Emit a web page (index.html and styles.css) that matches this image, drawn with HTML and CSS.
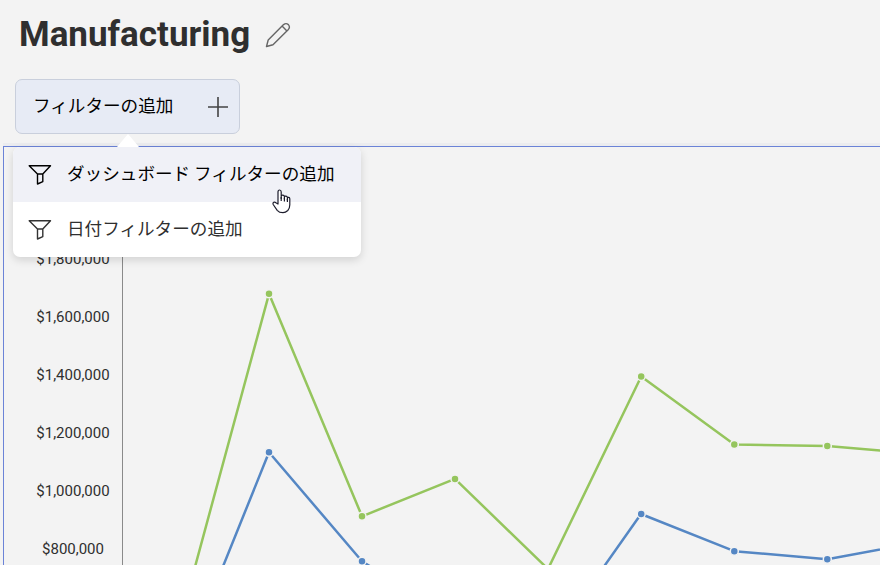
FILE: index.html
```html
<!DOCTYPE html>
<html lang="ja">
<head>
<meta charset="utf-8">
<title>Manufacturing</title>
<link rel="stylesheet" href="styles.css">
</head>
<body>
<header class="header">
  <h1 class="title">Manufacturing</h1>
  <svg class="edit" viewBox="0 0 26 26" width="26" height="26">
    <path d="M1.5 24.5 3.2 18 18.6 2.6Q21 .6 23.4 2.6 25.4 5 23.4 7.4L8 22.8ZM17.1 4.1l4.8 4.8"/>
  </svg>
</header>
<div class="toolbar">
  <button class="add-filter"><span>フィルターの追加</span>
    <svg class="plus" viewBox="0 0 20 20" width="20" height="20"><path d="M10 0v20M0 10h20"/></svg>
  </button>
  <div class="menu">
    <div class="item active">
      <svg class="funnel" viewBox="0 0 24 22" width="24" height="22"><path d="M1.2 1.7h21.3l-7.700 8.300v7.600L9.500 20V10ZM9.500 10h5.300"/></svg>
      <span>ダッシュボード フィルターの追加</span>
    </div>
    <div class="item">
      <svg class="funnel" viewBox="0 0 24 22" width="24" height="22"><path d="M1.2 1.7h21.3l-7.700 8.300v7.600L9.500 20V10ZM9.500 10h5.300"/></svg>
      <span>日付フィルターの追加</span>
    </div>
    <svg class="cursor" viewBox="0 0 20 25" width="20" height="25"><path d="M6 15V3Q6 1 7.6 1T9.2 3v6.4V7.1q.2-1.2 1.6-1t1.6 1.2V10 7.9q.3-1 1.5-.8t1.5 1.2V11 9.2q.3-1 1.3-.8t1.1 1.3v6.1q0 3.5-2 5.7Q13.500 23.700 11 23.700q-3.800 0-5.800-2.400L1.200 15.500q-.6-1.500.5-2.200 1.200-.5 2.200.4Z"/><path d="M9.200 8v4M12.400 9v3.500M15.400 10v3"/></svg>
  </div>
</div>
<main class="panel">
  <div class="labels">
    <span>$1,800,000</span><span>$1,600,000</span><span>$1,400,000</span><span>$1,200,000</span><span>$1,000,000</span><span>$800,000</span>
  </div>
  <svg class="plot" viewBox="122 147 758 418" width="758" height="418">
    <path class="axis" d="M122.500 147v418"/>
    <g class="blue">
      <path d="M176 683 269 452.300 362 561.200 455 620 548 646 641 514 734.300 551.200 827.300 559.200 920 542"/>
      <circle cx="269" cy="452.300" r="4"/><circle cx="362" cy="561.200" r="4"/><circle cx="641.200" cy="514" r="4"/><circle cx="734.300" cy="551.200" r="4"/><circle cx="827.300" cy="559.200" r="4"/>
    </g>
    <g class="green">
      <path d="M176 637 269 293.800 362 516.300 455 478.900 548 569 641.200 376.500 734.300 444.500 827.300 446 920 454"/>
      <circle cx="269" cy="293.800" r="4"/><circle cx="362" cy="516.300" r="4"/><circle cx="455" cy="478.900" r="4"/><circle cx="641.200" cy="376.500" r="4"/><circle cx="734.300" cy="444.500" r="4"/><circle cx="827.300" cy="446" r="4"/>
    </g>
  </svg>
</main>
</body>
</html>
```
FILE: styles.css
```css
* { box-sizing: border-box; }
body {
  margin: 0;
  height: 565px;
  overflow: hidden;
  background: #f3f3f3;
  color: #2f2f2f;
  font-family: Roboto, "Noto Sans CJK JP", sans-serif;
}
.header {
  display: flex;
  align-items: center;
  height: 70px;
  padding-left: 19px;
  gap: 15px;
}
.title { margin: 0; font-size: 35px; font-weight: 700; line-height: 42px; }
.edit { fill: none; stroke: #666; stroke-width: 1.4; stroke-linejoin: round; }
.toolbar {
  position: relative;
  z-index: 1;
  height: 76px;
  padding: 9px 0 0 15px;
}
.add-filter {
  display: flex;
  align-items: center;
  justify-content: space-between;
  width: 225px;
  height: 55px;
  padding: 0 11px 0 17px;
  border: 1px solid #c9cfdc;
  border-radius: 7px;
  background: #e7ebf5;
  color: #000;
  font: 17.600px/26px "Noto Sans CJK JP", sans-serif;
}
.add-filter span, .item span { padding-bottom: 4px; }
.plus { fill: none; stroke: #444; stroke-width: 1.6; }
.menu {
  position: absolute;
  top: 77px;
  left: 13px;
  width: 348px;
  height: 110px;
  border-radius: 7px;
  background: #fff;
  box-shadow: 0 3px 9px rgba(0, 0, 0, .14);
  font: 17.600px/26px "Noto Sans CJK JP", sans-serif;
}
.menu::before {
  content: "";
  position: absolute;
  left: 104px;
  top: -13px;
  width: 22px;
  height: 13px;
  background: #fff;
  clip-path: polygon(50% 0, 100% 100%, 0 100%);
}
.item {
  display: flex;
  align-items: center;
  height: 55px;
  padding-left: 15px;
  gap: 15px;
  white-space: nowrap;
}
.active { background: #f0f1f7; color: #000; border-radius: 7px 7px 0 0; }
.funnel { fill: none; stroke: #333; stroke-width: 1.4; stroke-linejoin: round; }
.active .funnel { stroke: #000; }
.cursor {
  position: absolute;
  left: 259px;
  top: 42px;
  fill: #fff;
  stroke: #1c1c2c;
  stroke-width: 1.200;
  stroke-linejoin: round;
}
.panel {
  display: grid;
  grid-template-columns: 118px 758px;
  height: 419px;
  margin-left: 3px;
  border: solid #6b83d7;
  border-width: 1px 0 0 1px;
  box-shadow: 0 -3px 0 #ebecef;
}
.labels {
  display: flex;
  flex-direction: column;
  padding: 83px 0 0 20px;
  font-size: 15px;
  text-align: center;
  overflow: hidden;
}
.labels span { flex: none; height: 58.100px; line-height: 58px; }
.plot { display: block; }
.plot path { fill: none; stroke-width: 2.500; stroke-linejoin: round; }
.plot circle { stroke: #f3f3f3; stroke-width: 1.500; }
.plot .axis { stroke: #8a8a8a; stroke-width: 1; }
.blue path { stroke: #5587c4; }
.blue circle { fill: #5587c4; }
.green path { stroke: #95c55d; }
.green circle { fill: #95c55d; }
```
